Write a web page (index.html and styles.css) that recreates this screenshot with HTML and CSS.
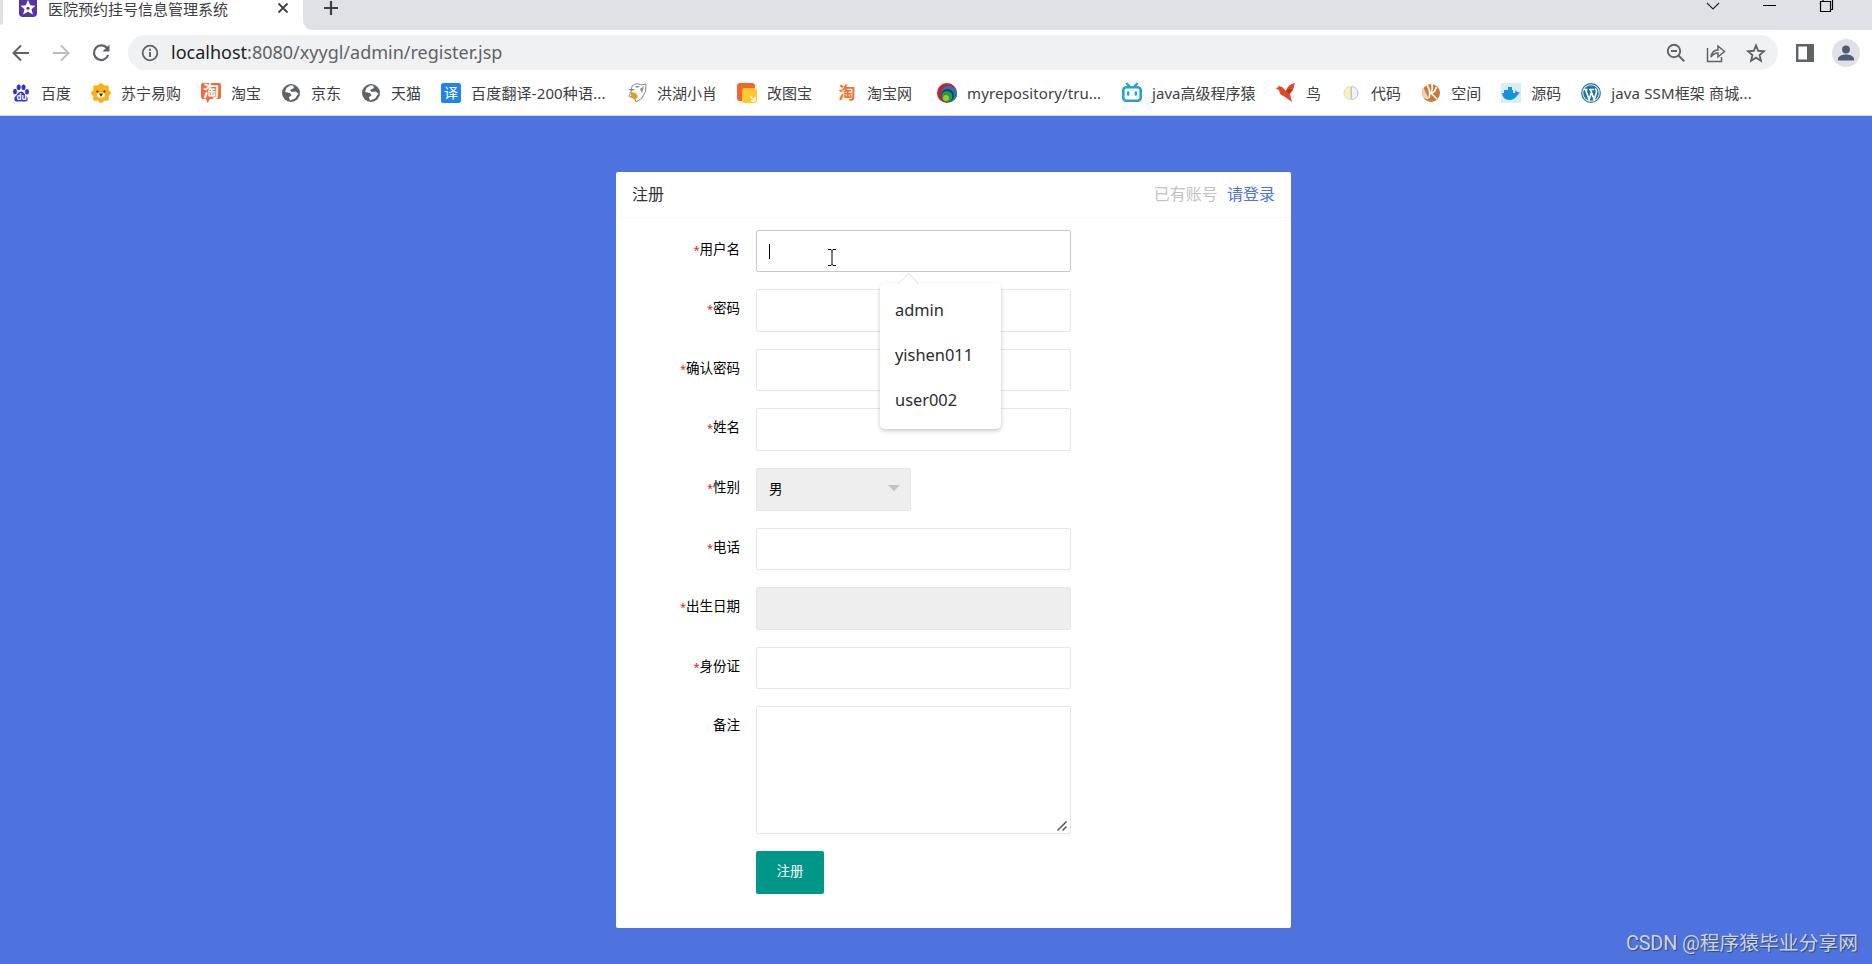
FILE: index.html
```html
<!DOCTYPE html>
<html lang="zh-CN">
<head>
  <meta charset="UTF-8">
  <meta name="viewport" content="width=device-width, initial-scale=1.0">
  <title>医院预约挂号信息管理系统</title>
  <link rel="stylesheet" href="styles.css">
</head>
<body>
  <div class="browser">
    <!-- Tab strip -->
    <div class="tabs">
      <div class="tab-edge"></div>
      <div class="tab">
        <svg class="tab-icon" width="18" height="18" viewBox="0 0 18 18"><rect y="-3" width="18" height="20" rx="4" fill="#5335a8"/><path d="M9 0l2.200 5.300 5.300.4-4 3.600 1.400 5.200L9 11.700l-4.900 2.800 1.400-5.200-4-3.600 5.300-.4z" fill="#fff"/><circle cx="9" cy="8.300" r="1.500" fill="#5335a8"/></svg>
        <span class="tab-title">医院预约挂号信息管理系统</span>
        <svg class="tab-close" width="12" height="12" viewBox="0 0 12 12"><path d="M1.500 1.500l9 9M10.500 1.500l-9 9" stroke="#3c4043" stroke-width="1.800"/></svg>
      </div>
      <div class="tab-tail">
        <svg width="16" height="16" viewBox="0 0 16 16"><path d="M8 1v14M1 8h14" stroke="#3c4043" stroke-width="2.200"/></svg>
      </div>
      <div class="window-controls">
        <svg width="14" height="16" viewBox="0 0 14 16"><path d="M1 3l6 6 6-6" fill="none" stroke="#222" stroke-width="1.100"/></svg>
        <svg width="14" height="16" viewBox="0 0 14 16"><path d="M0 5.500h13" stroke="#000"/></svg>
        <svg width="14" height="16" viewBox="0 0 14 16"><path d="M.5 1.500h10v10H.5zM3 1V-1M10.500 9.500h2V-1" fill="none" stroke="#000" stroke-width="1.200"/></svg>
      </div>
    </div>

    <!-- Address bar -->
    <div class="toolbar">
      <div class="nav">
        <svg width="18" height="18" viewBox="0 0 18 18"><path d="M17 9H2M9 1.500L1.500 9 9 16.500" fill="none" stroke="#5f6368" stroke-width="2"/></svg>
        <svg width="18" height="18" viewBox="0 0 18 18"><path d="M1 9h15M9 1.500L16.500 9 9 16.500" fill="none" stroke="#bcbec1" stroke-width="2"/></svg>
        <svg width="18" height="18" viewBox="0 0 18 18"><path d="M15 4.200A7.300 7.300 0 1 0 16.200 11" fill="none" stroke="#5f6368" stroke-width="2.200"/><path d="M17.500.5v7h-7z" fill="#5f6368"/></svg>
      </div>
      <div class="omnibox">
        <svg width="18" height="18" viewBox="0 0 18 18"><circle cx="9" cy="9" r="7.300" fill="none" stroke="#5f6368" stroke-width="1.800"/><path d="M9 8v5M9 4.800v1.900" stroke="#5f6368" stroke-width="1.900"/></svg>
        <span class="url"><b>localhost</b>:8080/xyygl/admin/register.jsp</span>
        <div class="omnibox-actions">
          <svg width="20" height="20" viewBox="0 0 20 20"><circle cx="8" cy="8" r="6.200" fill="none" stroke="#5f6368" stroke-width="1.900"/><path d="M5 8h6M12.400 12.400l5.800 5.800" stroke="#5f6368" stroke-width="2"/></svg>
          <svg width="20" height="20" viewBox="0 0 20 20"><path d="M1.500 5v13.500h14V14M5 14c.5-4.500 3-6.800 7-7V3l6.500 5.500L12 14v-4c-3 0-5 1-7 4z" fill="none" stroke="#5f6368" stroke-width="1.500"/></svg>
          <svg width="20" height="20" viewBox="0 0 20 20"><path d="M10 2.500l2.200 5.300 5.700.5-4.300 3.800 1.300 5.600L10 14.700l-4.900 3 1.300-5.600-4.300-3.800 5.700-.5z" fill="none" stroke="#5f6368" stroke-width="1.900"/></svg>
        </div>
      </div>
      <div class="profile">
        <svg width="18" height="18" viewBox="0 0 18 18"><path d="M1.200 1.200h15.600v15.600H1.200z" fill="#fff" stroke="#5f6368" stroke-width="2.400"/><path d="M11 1h6v16h-6z" fill="#5f6368"/></svg>
        <svg width="28" height="28" viewBox="0 0 28 28"><circle cx="14" cy="14" r="14" fill="#dee1e8"/><circle cx="14" cy="10.500" r="3.900" fill="#515b6e"/><path d="M6 21.500v-1.500c0-3.300 5-4.500 8-4.500s8 1.200 8 4.500v1.500z" fill="#515b6e"/></svg>
      </div>
    </div>

    <!-- Bookmarks -->
    <div class="bookmarks">
      <div class="bookmark"><svg width="20" height="20" viewBox="0 0 20 20"><g fill="#2a32dc"><ellipse cx="4" cy="8.500" rx="2" ry="2.700"/><ellipse cx="7.700" cy="4.200" rx="2" ry="2.800"/><ellipse cx="12.500" cy="4.200" rx="2" ry="2.800"/><ellipse cx="16" cy="8.800" rx="2" ry="2.700"/><path d="M10 8.500c2.500 0 3 2.300 4.700 3.900 2 1.800 2.400 3.200 1.600 4.800-1.200 2.200-4 1.100-6.300 1.100s-5.100 1.100-6.300-1.100c-.8-1.600-.4-3 1.600-4.800C7 10.800 7.500 8.500 10 8.500z"/></g><text class="glyph-du" x="5.400" y="16.800">du</text></svg><span>百度</span></div>
      <div class="bookmark"><svg width="20" height="20" viewBox="0 0 20 20"><g fill="#fbb116"><circle cx="10" cy="10" r="8.300"/><circle cx="10" cy="2.800" r="2.600"/><circle cx="15.300" cy="4.800" r="2.600"/><circle cx="17.200" cy="10" r="2.600"/><circle cx="15.300" cy="15.200" r="2.600"/><circle cx="10" cy="17.200" r="2.600"/><circle cx="4.700" cy="15.200" r="2.600"/><circle cx="2.800" cy="10" r="2.600"/><circle cx="4.700" cy="4.800" r="2.600"/></g><ellipse cx="10" cy="12" rx="4" ry="2.600" fill="#fff"/><circle cx="6.500" cy="8.500" r="1.100" fill="#352417"/><circle cx="13.500" cy="8.500" r="1.100" fill="#352417"/><path d="M8 10.500h4l-2 3.500z" fill="#352417"/></svg><span>苏宁易购</span></div>
      <div class="bookmark"><svg width="20" height="20" viewBox="0 0 20 20"><path d="M2 0h16q2 0 2 2v12q0 2-2 2H9l-2.500 4L5 16H2q-2 0-2-2V2q0-2 2-2z" fill="#f26a38"/><text class="glyph-tao" x="2" y="13.800">淘</text></svg><span>淘宝</span></div>
      <div class="bookmark"><svg width="20" height="20" viewBox="0 0 20 20"><circle cx="10" cy="10" r="9" fill="#5f6368"/><path d="M9 2.500L5.500 5 4 9l5 1 1.500 2.500L8 14l1 3.500 5-2 3.500-5-3-2-4 .5-1.500-2L13 5l-1-2.500z" fill="#fff"/></svg><span>京东</span></div>
      <div class="bookmark"><svg width="20" height="20" viewBox="0 0 20 20"><circle cx="10" cy="10" r="9" fill="#5f6368"/><path d="M9 2.500L5.500 5 4 9l5 1 1.500 2.500L8 14l1 3.500 5-2 3.500-5-3-2-4 .5-1.500-2L13 5l-1-2.500z" fill="#fff"/></svg><span>天猫</span></div>
      <div class="bookmark bookmark-long"><svg width="20" height="20" viewBox="0 0 20 20"><rect width="20" height="20" rx="2.500" fill="#2083ee"/><text class="glyph-yi" x="3" y="15.200">译</text></svg><span>百度翻译-200种语...</span></div>
      <div class="bookmark"><svg width="20" height="20" viewBox="0 0 20 20"><path d="M5 3Q10-1 14 2l5-1q1 8-4 14l-6 4-1-3-6-3 2-4z" fill="#fff" stroke="#888" stroke-width="1"/><path d="M4 9l5 1 2 4-3 3-4-3z" fill="#dda41d"/><path d="M1 6l7 0-3 2zM8 3h5l-3 2zM13 6l4-3-2 7z" fill="#888"/></svg><span>洪湖小肖</span></div>
      <div class="bookmark bookmark-spaced"><svg width="20" height="20" viewBox="0 0 20 20"><rect width="18" height="18" rx="3" fill="#f4642c"/><rect x="5" y="5" width="15" height="15" rx="3" fill="#fdc72e"/><path d="M13 13l5 5M18 14v4h-4" fill="none" stroke="#fff" stroke-width="1.300"/></svg><span>改图宝</span></div>
      <div class="bookmark bookmark-spaced"><svg width="20" height="20" viewBox="0 0 20 20"><text class="glyph-tao-orange" x="1.500" y="15.800">淘</text></svg><span>淘宝网</span></div>
      <div class="bookmark bookmark-repo"><svg width="20" height="20" viewBox="0 0 20 20"><circle cx="10" cy="10" r="10" fill="#c21f3a"/><circle cx="12" cy="11" r="8" fill="#1d78bd"/><circle cx="10.500" cy="12.500" r="6.500" fill="#173f4c"/><circle cx="10" cy="13.500" r="5.500" fill="#269849"/><circle cx="9" cy="15" r="3" fill="#a5c924"/></svg><span>myrepository/tru...</span></div>
      <div class="bookmark bookmark-java"><svg width="20" height="20" viewBox="0 0 20 20"><path d="M5 .8L8 4M15 .8L12 4" stroke="#20a5d2" stroke-width="2.400" stroke-linecap="round"/><rect x="1.300" y="4.300" width="17.400" height="13.400" rx="3" fill="#fff" stroke="#20a5d2" stroke-width="2.600"/><path d="M6.200 9.500v2M13.800 9.500v2" stroke="#20a5d2" stroke-width="2.400" stroke-linecap="round"/></svg><span>java高级程序猿</span></div>
      <div class="bookmark"><svg width="20" height="20" viewBox="0 0 20 20"><path d="M0 6l3-3 3 1 4 4Q12 1 19 0l-2 7-3 4 2 8-7-5-5-3-1-4z" fill="#df492b"/><path d="M10 7l6-1-3 5z" fill="#b52e1a"/></svg><span>鸟</span></div>
      <div class="bookmark"><svg width="20" height="20" viewBox="0 0 20 20"><path d="M9.500 3.500a6.500 6.500 0 0 0 0 13z" fill="#f8f1bd" stroke="#e5dda9"/><path d="M10.500 3.500a6.500 6.500 0 0 1 0 13z" fill="#eef3fb" stroke="#b4c3de"/></svg><span>代码</span></div>
      <div class="bookmark"><svg width="20" height="20" viewBox="0 0 20 20"><circle cx="10" cy="10" r="9" fill="#cf7a32"/><path d="M2 4l6 12Q2 17 1 11z" fill="#e4d4b9"/><path d="M6 2q4 6 2 13M11 1q1 5-1 9l6 6M15 4q0 4-4 6" fill="none" stroke="#fff" stroke-width="1.600"/></svg><span>空间</span></div>
      <div class="bookmark"><svg width="20" height="20" viewBox="0 0 20 20"><rect width="20" height="20" fill="#d8eef8"/><path d="M1 10h13l.5-3 1.500 2 3 .5-2.500 2.500Q14 17 8 17q-6 0-7-7zM3 7h9v3H3zM7 4h4v3H7z" fill="#1594dc"/></svg><span>源码</span></div>
      <div class="bookmark bookmark-last"><svg width="20" height="20" viewBox="0 0 20 20"><circle cx="10" cy="10" r="9.300" fill="#fff" stroke="#21759b" stroke-width="1.200"/><circle cx="10" cy="10" r="7.800" fill="#21759b"/><path d="M2.500 6.500h4M8 6.500h5M4.500 6.500l3.600 10L10.200 10M9.500 6.500l3.600 10 2.500-7.500q0-2-1.500-3.500" fill="none" stroke="#fff" stroke-width="1.600"/></svg><span>java SSM框架 商城...</span></div>
    </div>
  </div>

  <!-- Register page -->
  <main class="page">
    <div class="card">
      <div class="card-header">
        <span>注册</span>
        <div class="login-tip">已有账号 <a href="#">请登录</a></div>
      </div>
      <form class="form">
        <div class="form-item">
          <label><i>*</i>用户名</label>
          <div class="input input-focus">
            <span class="caret"></span>
            <svg class="cursor" width="8" height="17" viewBox="0 0 8 17"><path d="M0 .5h3l1 1 1-1h3M4 1v15M0 16.500h3l1-1 1 1h3" fill="none" stroke="#000"/></svg>
            <div class="suggest">
              <div>admin</div>
              <div>yishen011</div>
              <div>user002</div>
            </div>
          </div>
        </div>
        <div class="form-item">
          <label><i>*</i>密码</label>
          <div class="input"></div>
        </div>
        <div class="form-item">
          <label><i>*</i>确认密码</label>
          <div class="input"></div>
        </div>
        <div class="form-item">
          <label><i>*</i>姓名</label>
          <div class="input"></div>
        </div>
        <div class="form-item">
          <label><i>*</i>性别</label>
          <div class="input select"><span>男</span><span class="select-arrow"></span></div>
        </div>
        <div class="form-item">
          <label><i>*</i>电话</label>
          <div class="input"></div>
        </div>
        <div class="form-item">
          <label><i>*</i>出生日期</label>
          <div class="input input-disabled"></div>
        </div>
        <div class="form-item">
          <label><i>*</i>身份证</label>
          <div class="input"></div>
        </div>
        <div class="form-item">
          <label>备注</label>
          <div class="input textarea"><svg width="10" height="10" viewBox="0 0 10 10"><path d="M.5 9.500l9-9M5.500 9.500l4-4" stroke="#555" stroke-width="1.500"/></svg></div>
        </div>
        <div class="form-item">
          <label></label>
          <button class="btn" type="button">注册</button>
        </div>
      </form>
    </div>
    <div class="watermark"><span>CSDN @</span>程序猿毕业分享网</div>
  </main>
</body>
</html>
```

FILE: styles.css
```css
* {
  box-sizing: border-box;
  margin: 0;
  padding: 0;
}

body {
  height: 964px;
  display: flex;
  flex-direction: column;
  overflow: hidden;
  font-family: 'Noto Sans', 'Noto Sans CJK SC', sans-serif;
  background: #4e73df;
}

svg {
  display: block;
  flex: none;
  overflow: visible;
}

/* Browser chrome */
.browser {
  height: 116px;
  flex: none;
  background: #fff;
  border-bottom: 1px solid #d5dcef;
}

.tabs {
  height: 30px;
  display: flex;
  background: #fff;
}

.tab-edge {
  width: 3px;
  height: 25px;
  background: #dee1e6;
  border-bottom-right-radius: 3px;
}

.tab {
  width: 300px;
  height: 30px;
  display: flex;
  padding-left: 16px;
}

.tab-title {
  width: 186px;
  margin-left: 11px;
  line-height: 18px;
  font-size: 15px;
  color: #3c4043;
  white-space: nowrap;
}

.tab-close {
  margin: 2px 0 0 43px;
}

.tab-tail {
  flex: 1;
  padding-left: 20px;
  background: #dee1e6;
  border-bottom-left-radius: 9px;
}

.window-controls {
  width: 166px;
  display: flex;
  gap: 43px;
  background: #dee1e6;
}

.toolbar {
  height: 40px;
  display: flex;
  align-items: center;
  padding: 5px 12px 0 12px;
}

.nav {
  width: 116px;
  display: flex;
  gap: 22px;
}

.omnibox {
  width: 1650px;
  height: 35px;
  display: flex;
  align-items: center;
  padding: 0 12px 0 13px;
  border-radius: 18px;
  background: #f0f1f3;
}

.url {
  flex: 1;
  margin-left: 12px;
  font-size: 18px;
  line-height: 35px;
  color: #5f6368;
}

.url b {
  font-weight: normal;
  color: #202124;
}

.omnibox-actions {
  display: flex;
  gap: 20px;
}

.profile {
  display: flex;
  align-items: center;
  gap: 18px;
  margin-left: 18px;
}

.bookmarks {
  height: 45px;
  display: flex;
  align-items: center;
  gap: 20px;
  padding: 1px 0 0 11px;
}

.bookmark {
  display: flex;
  align-items: center;
  gap: 10px;
  font-size: 15px;
  line-height: 22px;
  color: #3c4043;
  white-space: nowrap;
}

.bookmark-long {
  width: 166px;
  letter-spacing: 0.15px;
}

.bookmark-repo {
  width: 165px;
  letter-spacing: 0.1px;
}

.bookmark-java {
  width: 134px;
}

.bookmark-spaced {
  width: 80px;
}

.bookmark-last {
  letter-spacing: 0.15px;
}

.glyph-du {
  font: bold 8px 'Noto Sans', sans-serif;
  fill: #fff;
}

.glyph-tao {
  font: bold 16px 'Noto Sans CJK SC', sans-serif;
  fill: #fff;
}

.glyph-yi {
  font: 14px 'Noto Sans CJK SC', sans-serif;
  fill: #fff;
}

.glyph-tao-orange {
  font: bold 17px 'Noto Sans CJK SC', sans-serif;
  fill: #f2702c;
}

/* Register card */
.page {
  flex: 1;
  position: relative;
  padding: 56px 0 0 616px;
}

.card {
  width: 675px;
  height: 756px;
  border-radius: 2px;
  background: #fff;
}

.card-header {
  height: 46px;
  display: flex;
  justify-content: space-between;
  padding: 0 16px;
  border-bottom: 1px solid #f6f6f6;
  line-height: 44px;
  font-size: 16px;
  color: #333;
}

.login-tip {
  color: #c2c2c2;
  word-spacing: 5px;
}

.login-tip a {
  color: #4e73df;
  text-decoration: none;
}

.form {
  display: flex;
  flex-direction: column;
  gap: 17px;
  padding-top: 11.7px;
  font-size: 13.5px;
  color: #000;
}

.form-item {
  display: flex;
  gap: 16px;
}

.form-item label {
  width: 124px;
  line-height: 38px;
  text-align: right;
}

.form-item i {
  font-style: normal;
  font-size: 11px;
  color: #d9232e;
}

.input {
  position: relative;
  width: 315px;
  height: 42.6px;
  border: 1px solid #e6e6e6;
  border-radius: 2px;
}

.input-focus {
  border-color: #c9c9c9;
}

.input-disabled {
  background: #eee;
}

.caret {
  position: absolute;
  left: 12px;
  top: 13px;
  width: 1px;
  height: 15px;
  background: #000;
}

.cursor {
  position: absolute;
  left: 71px;
  top: 18px;
}

.select {
  width: 155px;
  display: flex;
  align-items: center;
  justify-content: space-between;
  padding: 0 10px 2px 12px;
  background: #eee;
}

.select-arrow {
  border: 6px solid transparent;
  border-top-color: #c2c2c2;
  border-bottom: 0;
}

.textarea {
  height: 128px;
  display: flex;
  align-items: flex-end;
  justify-content: flex-end;
  padding: 0 3px 2px 0;
}

.btn {
  width: 68px;
  height: 43px;
  padding-bottom: 5px;
  border: none;
  border-radius: 2px;
  background: #009688;
  color: #fff;
  font-family: inherit;
  font-size: 13.5px;
}

/* Autofill dropdown */
.suggest {
  position: absolute;
  z-index: 2;
  left: 123px;
  top: 52px;
  width: 121px;
  height: 146px;
  padding: 4px 0 0 15px;
  border-radius: 5px;
  background: #fff;
  box-shadow: 0 2px 4px rgba(0, 0, 0, 0.22);
  font-size: 16.4px;
  line-height: 45px;
  color: #2b2c2f;
}

.suggest::before {
  content: '';
  position: absolute;
  left: 21px;
  top: -7px;
  width: 14px;
  height: 14px;
  background: #fff;
  border: 1px solid #e2e2e2;
  border-right: none;
  border-bottom: none;
  transform: rotate(45deg);
}

.watermark {
  position: absolute;
  right: 14px;
  bottom: 6px;
  font-family: Roboto, 'Noto Sans CJK SC', sans-serif;
  font-size: 19.8px;
  line-height: 28px;
  color: #ccd3e2;
  text-shadow: 1px 1px 1px #33476f;
}

.watermark span {
  letter-spacing: -0.1px;
}
```
